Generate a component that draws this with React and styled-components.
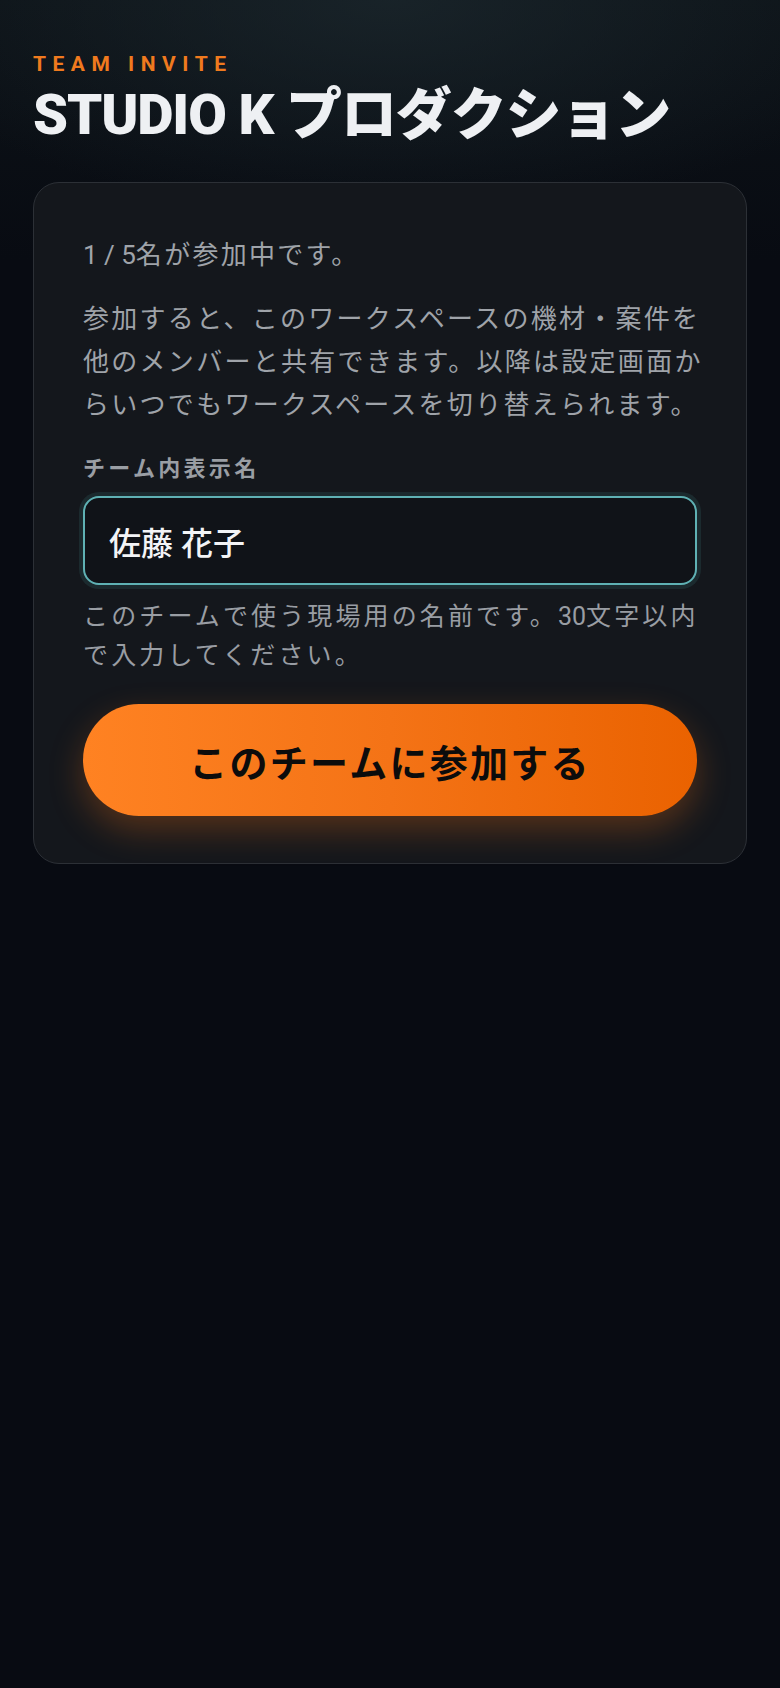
import React, {useState} from 'react'
import styled, {createGlobalStyle} from 'styled-components'

const GlobalStyle = createGlobalStyle`
  html, body {
    margin: 0;
    padding: 0;
    background: #080b12;
  }
  body {
    font-family: Roboto, "Noto Sans CJK JP", sans-serif;
    -webkit-font-smoothing: antialiased;
  }
  * { box-sizing: border-box; }
`

const Page = styled.main`
  min-height: 1688px;
  padding: 52px 33px 0;
  background:
    radial-gradient(ellipse 520px 220px at 50% 0%, rgba(28, 40, 46, 0.75), rgba(8, 11, 18, 0) 100%),
    linear-gradient(180deg, #0d1318 0%, #080b12 260px, #080b12 100%);
`

const Eyebrow = styled.div`
  color: #f07a1e;
  font-size: 21px;
  font-weight: 700;
  letter-spacing: 0.31em;
  line-height: 24px;
`

const Title = styled.h1`
  margin: 6px 0 0;
  color: #eef0f3;
  font-family: Roboto, "Noto Sans CJK JP", sans-serif;
  font-size: 56px;
  font-weight: 900;
  letter-spacing: -0.02em;
  line-height: 66px;
`

const Card = styled.section`
  margin-top: 34px;
  padding: 51px 49px 47px;
  background: #14171c;
  border: 1px solid #2c3036;
  border-radius: 26px;
  display: flex;
  flex-direction: column;
`

const Text = styled.p`
  margin: ${({$gap}) => $gap || 0}px -10px 0 0;
  color: #9fa3a9;
  font-size: 26px;
  line-height: 43px;
  letter-spacing: 0.088em;
`

// latin figures sit tighter than the kana around them
const Num = styled.span`
  letter-spacing: 0;
`

const Label = styled.label`
  margin-top: 27px;
  color: #9a9ea4;
  font-size: 22px;
  font-weight: 700;
  letter-spacing: 0.15em;
  line-height: 30px;
`

const NameInput = styled.input`
  margin-top: 12px;
  height: 89px;
  width: 100%;
  padding: 0 24px;
  background: #101318;
  border: 2px solid #5fb1b4;
  border-radius: 16px;
  box-shadow: 0 0 0 4px rgba(70, 140, 145, 0.16);
  color: #f3f4f6;
  font-family: Roboto, "Noto Sans CJK JP", sans-serif;
  font-size: 32px;
  font-weight: 500;
  outline: none;
`

const Hint = styled.p`
  margin: 12px -10px 0 0;
  color: #999da3;
  font-size: 25px;
  line-height: 39px;
  letter-spacing: 0.125em;
`

const JoinButton = styled.button`
  margin-top: 29px;
  height: 112px;
  width: 100%;
  border: none;
  border-radius: 56px;
  background: linear-gradient(90deg, #ff8222 0%, #f47316 50%, #ea6200 100%);
  box-shadow: 0 14px 34px rgba(255, 118, 20, 0.28);
  color: #0c0c0c;
  font-family: Roboto, "Noto Sans CJK JP", sans-serif;
  font-size: 38px;
  font-weight: 700;
  letter-spacing: 0.06em;
  cursor: pointer;
`

export default function App() {
  const [name, setName] = useState('佐藤 花子')
  return (
    <>
      <GlobalStyle />
      <Page>
        <Eyebrow>TEAM INVITE</Eyebrow>
        <Title>STUDIO K プロダクション</Title>
        <Card>
          <Text><Num>1 / 5</Num>名が参加中です。</Text>
          <Text $gap={21}>
            参加すると、このワークスペースの機材・案件を他のメンバーと共有できます。以降は設定画面からいつでもワークスペースを切り替えられます。
          </Text>
          <Label htmlFor="display-name">チーム内表示名</Label>
          <NameInput id="display-name" value={name} onChange={e => setName(e.target.value)} />
          <Hint>このチームで使う現場用の名前です。<Num>30</Num>文字以内で入力してください。</Hint>
          <JoinButton>このチームに参加する</JoinButton>
        </Card>
      </Page>
    </>
  )
}
